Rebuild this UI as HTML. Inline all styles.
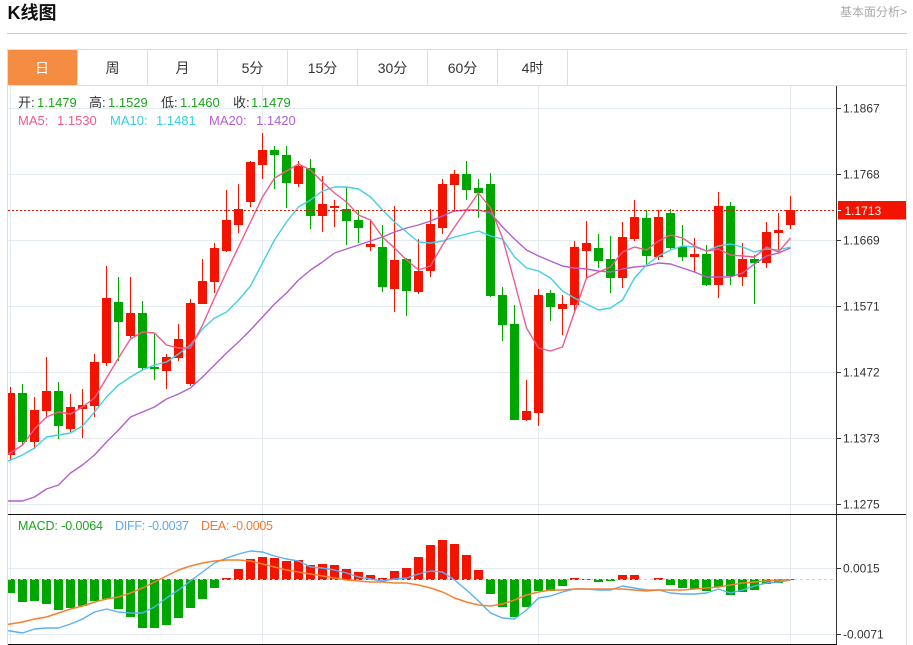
<!DOCTYPE html>
<html lang="zh">
<head>
<meta charset="utf-8">
<title>K线图</title>
<style>
html,body{margin:0;padding:0;background:#fff;width:913px;height:645px;overflow:hidden}
svg{display:block}
text{font-family:"Liberation Sans","Noto Sans CJK SC",sans-serif}
</style>
</head>
<body>
<svg width="913" height="645" viewBox="0 0 913 645" xmlns="http://www.w3.org/2000/svg">
<defs><clipPath id="c"><rect x="8" y="86" width="828" height="558"/></clipPath></defs>
<rect width="913" height="645" fill="#fff"/>

<text x="7.5" y="19" font-size="18" font-weight="bold" fill="#111">K线图</text>
<text x="840" y="16" font-size="12" fill="#aaa">基本面分析&gt;</text>
<path d="M7 33.5H907" stroke="#ccc" fill="none"/>

<path d="M7 49.5H906.5M7 85.5H906.5M7.5 49V645M906.5 49V645M77.5 50V85M147.5 50V85M217.5 50V85M287.5 50V85M357.5 50V85M427.5 50V85M497.5 50V85M567.5 50V85" stroke="#dcdfe0" fill="none"/>
<rect x="8" y="50" width="69" height="35" rx="1" fill="#f48c41"/>
<g font-size="14" fill="#333" text-anchor="middle">
<text x="42" y="73" fill="#fff">日</text>
<text x="112.5" y="73">周</text>
<text x="182.5" y="73">月</text>
<text x="252.5" y="73">5分</text>
<text x="322.5" y="73">15分</text>
<text x="392.5" y="73">30分</text>
<text x="462.5" y="73">60分</text>
<text x="532.5" y="73">4时</text>
</g>

<path d="M8 108.5H836M8 174.5H836M8 240.5H836M8 306.5H836M8 372.5H836M8 438.5H836M8 504.5H836M8 568.5H836M8 634.5H836M10.5 86V644M262.5 86V644M538.5 86V644M790.5 86V644" stroke="#e3ebf1" fill="none"/>

<g clip-path="url(#c)" fill="none">
<path stroke="#f31400" d="M10.5 387V460M34.5 397V449M46.5 357V418M70.5 394V432M82.5 389V438M94.5 354V417M106.5 266V366M130.5 277V338M166.5 354V389M178.5 324V361M190.5 299V386M202.5 259V304M214.5 243V293M226.5 190V252M238.5 184V233M250.5 161V207M262.5 133V179M298.5 161V187M322.5 176V232M334.5 200V227M370.5 220V251M394.5 206V312M418.5 239V294M430.5 209V277M442.5 179V234M454.5 170V212M526.5 380V421M538.5 289V426M562.5 295V335M574.5 241V312M586.5 221V278M622.5 222V288M634.5 200V241M658.5 210V260M694.5 238V272M718.5 192V298M742.5 243V286M766.5 222V268M778.5 213V252M790.5 196V229"/>
<path stroke="#f31400" stroke-width="9" d="M10.5 393V455M34.5 410V442M46.5 391V411M70.5 407V429M82.5 405V409M94.5 362V406M106.5 298V363M130.5 313V336M166.5 357V371M178.5 339V358M190.5 303V384M202.5 281V304M214.5 248V282M226.5 220V251M238.5 209V225M250.5 162V202M262.5 150V165M298.5 166V184M322.5 204V216M334.5 206V208M370.5 244V247M394.5 260V289M418.5 271V292M430.5 224V271M442.5 184V228M454.5 174V185M526.5 411V420M538.5 295V413M562.5 304V309M574.5 247V305M586.5 243V251M622.5 237V278M634.5 217V239M658.5 217V257M694.5 254V257M718.5 206V285M742.5 259V277M766.5 232V263M778.5 230V233M790.5 210V225"/>
<path stroke="#00a600" d="M22.5 384V445M58.5 382V439M118.5 277V361M142.5 301V370M154.5 334V380M274.5 146V189M286.5 146V208M310.5 159V229M346.5 187V245M358.5 210V243M382.5 225V292M406.5 258V316M466.5 161V200M478.5 179V218M490.5 173V297M502.5 287V341M514.5 305V420M550.5 290V321M598.5 234V268M610.5 236V293M646.5 210V265M670.5 209V249M682.5 225V261M706.5 245V286M730.5 202V285M754.5 255V304"/>
<path stroke="#00a600" stroke-width="9" d="M22.5 393V442M58.5 391V426M118.5 302V322M142.5 313V368M154.5 367V369M274.5 150V155M286.5 155V183M310.5 168V216M346.5 209V221M358.5 220V228M382.5 247V287M406.5 259V291M466.5 174V190M478.5 188V193M490.5 184V296M502.5 295V325M514.5 324V420M550.5 293V307M598.5 248V261M610.5 259V278M646.5 218V256M670.5 213V248M682.5 247V257M706.5 254V285M730.5 206V276M754.5 259V263"/>

<path stroke="#f31400" stroke-width="9" d="M226.5 580V578M238.5 580V569M250.5 580V559M262.5 580V557M274.5 580V558M286.5 580V561M298.5 580V560M310.5 580V565M322.5 580V564M334.5 580V565M346.5 580V569M358.5 580V572M370.5 580V575M382.5 580V578M394.5 580V571M406.5 580V568M418.5 580V557M430.5 580V545M442.5 580V540M454.5 580V544M466.5 580V555M478.5 580V570M574.5 580V578M586.5 580V579M622.5 580V575M634.5 580V575M658.5 580V578"/>
<path stroke="#00a600" stroke-width="9" d="M10.5 579V593M22.5 579V602M34.5 579V601M46.5 579V604M58.5 579V610M70.5 579V608M82.5 579V606M94.5 579V601M106.5 579V599M118.5 579V609M130.5 579V617M142.5 579V628M154.5 579V628M166.5 579V625M178.5 579V618M190.5 579V608M202.5 579V599M214.5 579V588M490.5 579V594M502.5 579V607M514.5 579V617M526.5 579V607M538.5 579V591M550.5 579V591M562.5 579V586M598.5 579V582M610.5 579V581M670.5 579V585M682.5 579V588M694.5 579V589M706.5 579V591M718.5 579V587M730.5 579V595M742.5 579V592M754.5 579V590M766.5 579V584M778.5 579V583M790.5 579V580"/>
</g>
<path d="M8 579.5H834" stroke="#a9dcec" stroke-dasharray="3 3" fill="none"/>

<g clip-path="url(#c)" fill="none" stroke-width="1.4" stroke-linejoin="round">
<polyline stroke="#b260cc" points="-1.5,501 10.5,501 22.5,501 34.5,497 46.5,489 58.5,485 70.5,473 82.5,465 94.5,455 106.5,442 118.5,430 130.5,417 142.5,412 154.5,407 166.5,399 178.5,394 190.5,388 202.5,377 214.5,365 226.5,353 238.5,342 250.5,330 262.5,317 274.5,304 286.5,293 298.5,280 310.5,270 322.5,262 334.5,253 346.5,249 358.5,245 370.5,241 382.5,237 394.5,232 406.5,228 418.5,225 430.5,221 442.5,216 454.5,211 466.5,210 478.5,210 490.5,213 502.5,227 514.5,239 526.5,250 538.5,256 550.5,261 562.5,266 574.5,268 586.5,269 598.5,271 610.5,272 622.5,269 634.5,267 646.5,266 658.5,263 670.5,264 682.5,268 694.5,272 706.5,277 718.5,277 730.5,277 742.5,273 754.5,264 766.5,256 778.5,253 790.5,248"/>
<polyline stroke="#44cfe4" points="-1.5,465 10.5,460 22.5,455 34.5,448 46.5,437 58.5,435 70.5,433 82.5,426 94.5,412 106.5,397 118.5,385 130.5,377 142.5,370 154.5,365 166.5,362 178.5,354 190.5,345 202.5,329 214.5,318 226.5,312 238.5,300 250.5,286 262.5,263 274.5,240 286.5,222 298.5,207 310.5,200 322.5,191 334.5,187 346.5,187 358.5,189 370.5,197 382.5,210 394.5,222 406.5,232 418.5,242 430.5,243 442.5,241 454.5,237 466.5,234 478.5,231 490.5,236 502.5,239 514.5,257 526.5,268 538.5,271 550.5,278 562.5,291 574.5,298 586.5,304 598.5,310 610.5,308 622.5,300 634.5,278 646.5,265 658.5,256 670.5,250 682.5,246 694.5,247 706.5,251 718.5,246 730.5,244 742.5,247 754.5,252 766.5,249 778.5,250 790.5,247"/>
<polyline stroke="#ee5b8e" points="-1.5,459 10.5,453 22.5,445 34.5,429 46.5,417 58.5,412 70.5,414 82.5,407 94.5,398 106.5,378 118.5,358 130.5,339 142.5,332 154.5,333 166.5,345 178.5,348 190.5,348 202.5,325 214.5,298 226.5,272 238.5,247 250.5,222 262.5,197 274.5,178 286.5,171 298.5,164 310.5,170 322.5,182 334.5,193 346.5,202 358.5,215 370.5,220 382.5,237 394.5,248 406.5,260 418.5,270 430.5,266 442.5,245 454.5,227 466.5,210 478.5,193 490.5,208 502.5,238 514.5,282 526.5,328 538.5,348 550.5,351 562.5,347 574.5,312 586.5,278 598.5,272 610.5,267 622.5,252 634.5,247 646.5,250 658.5,241 670.5,235 682.5,238 694.5,246 706.5,251 718.5,249 730.5,255 742.5,256 754.5,257 766.5,247 778.5,252 790.5,238"/>
<polyline stroke="#5ab0f5" stroke-width="1.4" points="-1.5,630 10.5,631 22.5,633 34.5,629 46.5,628 58.5,628 70.5,624 82.5,619 94.5,612 106.5,609 118.5,612 130.5,613 142.5,613 154.5,607 166.5,598 178.5,590 190.5,581 202.5,572 214.5,563 226.5,558 238.5,554 250.5,551 262.5,552 274.5,556 286.5,559 298.5,561 310.5,567 322.5,568 334.5,570 346.5,573 358.5,577 370.5,579 382.5,581 394.5,579 406.5,578 418.5,574 430.5,571 442.5,572 454.5,580 466.5,590 478.5,601 490.5,613 502.5,618 514.5,619 526.5,610 538.5,598 550.5,596 562.5,592 574.5,589 586.5,589 598.5,590 610.5,590 622.5,586 634.5,588 646.5,590 658.5,590 670.5,593 682.5,594 694.5,594 706.5,593 718.5,589 730.5,593 742.5,590 754.5,586 766.5,583 778.5,582 790.5,580"/>
<polyline stroke="#f58030" stroke-width="1.5" points="-1.5,625 10.5,624 22.5,622 34.5,619 46.5,617 58.5,613 70.5,609 82.5,606 94.5,602 106.5,599 118.5,597 130.5,593 142.5,588 154.5,582 166.5,576 178.5,570 190.5,566 202.5,563 214.5,561 226.5,560 238.5,560 250.5,561 262.5,564 274.5,567 286.5,570 298.5,572 310.5,574 322.5,576 334.5,578 346.5,580 358.5,581 370.5,582 382.5,582 394.5,583 406.5,583 418.5,585 430.5,588 442.5,592 454.5,598 466.5,602 478.5,605 490.5,606 502.5,604 514.5,600 526.5,595 538.5,592 550.5,590 562.5,590 574.5,589 586.5,589 598.5,589 610.5,589 622.5,589 634.5,590 646.5,591 658.5,590 670.5,590 682.5,590 694.5,589 706.5,588 718.5,587 730.5,585 742.5,583 754.5,582 766.5,581 778.5,580 790.5,580"/>
</g>

<path d="M8 210.5H834" stroke="#f31400" stroke-dasharray="2 2" fill="none"/>

<path d="M836.5 86V645" stroke="#333" fill="none"/>
<path d="M8 514.5H906M8 644.5H837" stroke="#111" fill="none"/>
<path d="M837 108.5H841M837 174.5H841M837 240.5H841M837 306.5H841M837 372.5H841M837 438.5H841M837 504.5H841M837 568.5H841M837 634.5H841" stroke="#333" fill="none"/>

<rect x="838" y="201" width="68" height="18.5" fill="#f31400"/>
<path d="M838 210.5H841" stroke="#fff" fill="none"/>
<text x="844.5" y="215" font-size="12" fill="#fff">1.1713</text>
<g font-size="12" fill="#333">
<text x="843" y="112.5">1.1867</text>
<text x="843" y="178.5">1.1768</text>
<text x="843" y="244.5">1.1669</text>
<text x="843" y="310.5">1.1571</text>
<text x="843" y="376.5">1.1472</text>
<text x="843" y="442.5">1.1373</text>
<text x="843" y="508.5">1.1275</text>
<text x="843" y="572.5">0.0015</text>
<text x="843" y="638.5">-0.0071</text>
</g>

<g font-size="13">
<text x="18" y="107" fill="#333">开:</text><text x="37" y="107" fill="#1aa51a">1.1479</text>
<text x="89" y="107" fill="#333">高:</text><text x="108" y="107" fill="#1aa51a">1.1529</text>
<text x="161" y="107" fill="#333">低:</text><text x="180" y="107" fill="#1aa51a">1.1460</text>
<text x="233" y="107" fill="#333">收:</text><text x="251" y="107" fill="#1aa51a">1.1479</text>
<text x="18" y="125" fill="#ef5b8f">MA5:</text><text x="57" y="125" fill="#ef5b8f">1.1530</text>
<text x="110" y="125" fill="#36cfe5">MA10:</text><text x="156" y="125" fill="#36cfe5">1.1481</text>
<text x="209" y="125" fill="#b35fce">MA20:</text><text x="256" y="125" fill="#b35fce">1.1420</text>
</g>
<g font-size="12.5">
<text x="18" y="530" fill="#1aa51a" textLength="85">MACD: -0.0064</text>
<text x="115" y="530" fill="#5aaaf0" textLength="74">DIFF: -0.0037</text>
<text x="201" y="530" fill="#f37a2a" textLength="72">DEA: -0.0005</text>
</g>
</svg>
</body>
</html>
